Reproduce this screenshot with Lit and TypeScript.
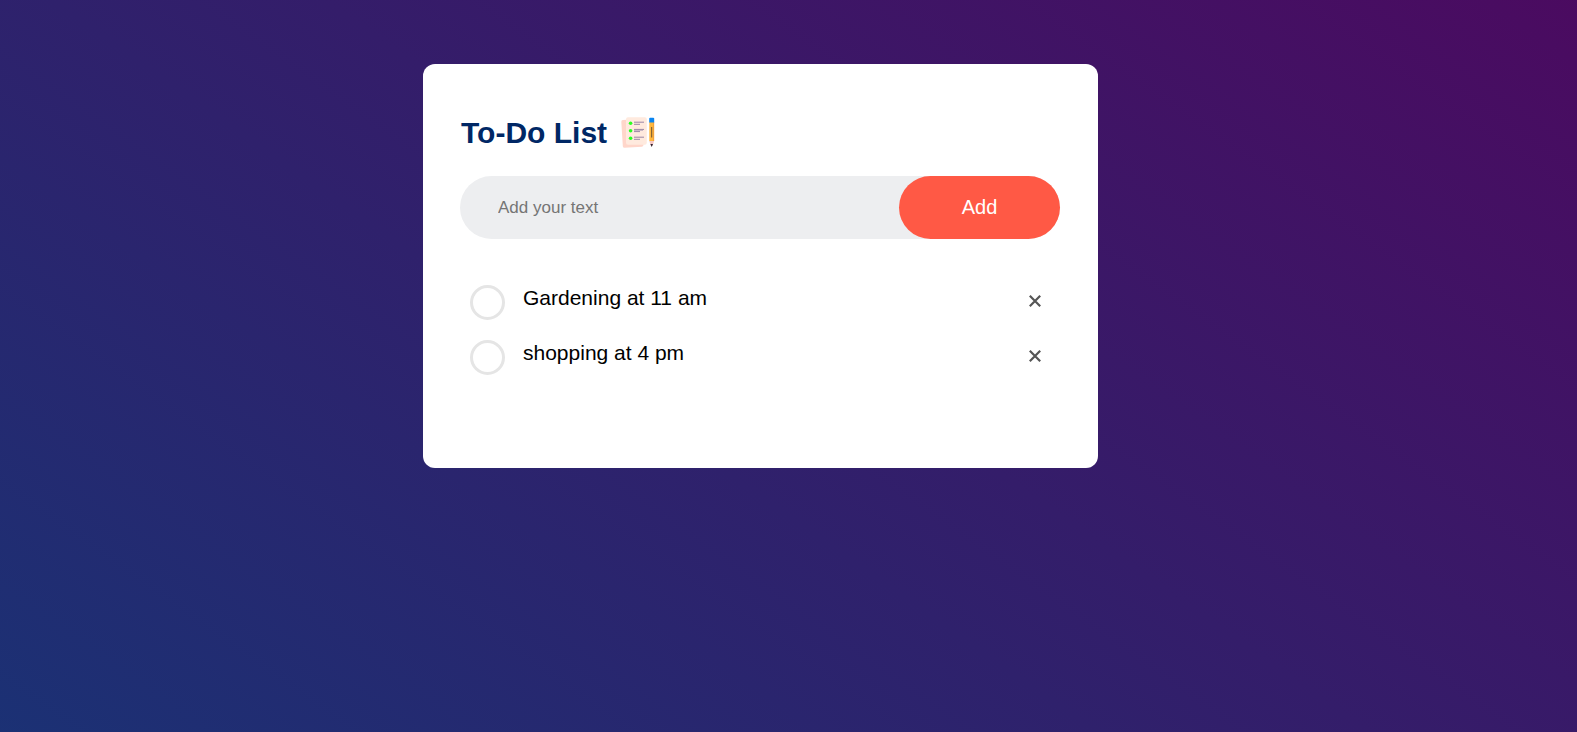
import { LitElement, html, css } from "lit";
import { customElement, state } from "lit/decorators.js";

interface Task {
  id: number;
  text: string;
  done: boolean;
}

@customElement("app-root")
export class AppRoot extends LitElement {
  static styles = css`
    :host {
      display: block;
      box-sizing: border-box;
      min-height: 100vh;
      padding: 64px 68px 24px 12px;
      background: linear-gradient(35deg, #153677 -13%, #4e085f 107%);
      font-family: Arial, "Liberation Sans", sans-serif;
    }
    * {
      box-sizing: border-box;
    }
    .card {
      max-width: 675px;
      margin: 0 auto;
      padding: 51px 38px 83px 37px;
      border-radius: 12px;
      background: #fff;
    }
    .title {
      display: flex;
      align-items: center;
      gap: 13px;
      margin: 0 0 25px;
      padding-left: 1px;
      color: #002765;
      font-size: 30px;
      line-height: 36px;
    }
    .icon {
      width: 36px;
      height: 36px;
    }
    .entry {
      display: flex;
      margin-bottom: 36px;
      border-radius: 32px;
      background: #edeef0;
    }
    .field {
      flex: 1;
      min-width: 0;
      padding: 0 0 0 38px;
      border: 0;
      outline: 0;
      background: transparent;
      font: 17px Arial, "Liberation Sans", sans-serif;
    }
    .field::placeholder {
      color: #757575;
    }
    .add {
      width: 161px;
      height: 63px;
      padding: 0;
      border: 0;
      border-radius: 32px;
      background: #ff5945;
      color: #fff;
      font: 20px Arial, "Liberation Sans", sans-serif;
      cursor: pointer;
    }
    .tasks {
      margin: 0;
      padding: 0;
      list-style: none;
    }
    .task {
      display: flex;
      align-items: flex-start;
      height: 55px;
      padding: 10px;
    }
    .check {
      flex: none;
      width: 35px;
      height: 35px;
      margin: 0 18px 0 0;
      border: 3px solid #e5e5e5;
      border-radius: 50%;
      appearance: none;
      cursor: pointer;
    }
    .check:checked {
      background: #ff5945;
    }
    .label {
      flex: 1;
      color: #000;
      font-size: 21px;
      line-height: 26px;
      cursor: pointer;
    }
    .check:checked + .label {
      color: #555;
      text-decoration: line-through;
    }
    .remove {
      width: 30px;
      height: 32px;
      padding: 0;
      border: 0;
      background: transparent;
      cursor: pointer;
    }
    .cross {
      display: block;
      width: 14px;
      height: 14px;
      margin: 0 auto;
    }
  `;

  @state() private tasks: Task[] = [
    { id: 1, text: "Gardening at 11 am", done: false },
    { id: 2, text: "shopping at 4 pm", done: false },
  ];

  private nextId = 3;

  private add(e: Event) {
    e.preventDefault();
    const field = this.renderRoot.querySelector<HTMLInputElement>(".field")!;
    const text = field.value.trim();
    if (!text) return;
    this.tasks = [...this.tasks, { id: this.nextId++, text, done: false }];
    field.value = "";
  }

  private toggle(id: number) {
    this.tasks = this.tasks.map((t) => (t.id === id ? { ...t, done: !t.done } : t));
  }

  private remove(id: number) {
    this.tasks = this.tasks.filter((t) => t.id !== id);
  }

  private renderIcon() {
    return html`<svg class="icon" viewBox="0 0 36 36" aria-hidden="true">
      <path d="M2.8 5 L20 4 Q22 4 22.2 5.5 L23.5 29.5 Q23.6 31.5 22 31.7 L4.5 32.7 Q3 32.7 2.8 31.2 L1.3 7 Q1.2 5.2 2.8 5Z" fill="#ffd6ca" />
      <rect x="6" y="2.2" width="20.8" height="27.6" rx="2" fill="#ffeade" />
      <g fill="#2bff22">
        <circle cx="10.6" cy="8.2" r="1.8" />
        <circle cx="10.6" cy="15.8" r="1.8" />
        <circle cx="10.6" cy="23.3" r="1.8" />
      </g>
      <path d="M14 7.2h10M14 9.3h6M14 14.4h10M14 16.6h6M14 22.2h10M14 24.3h6" stroke="#9a86a4" stroke-width="1" />
      <path d="M14 15.5h9" stroke="#cbb8c4" stroke-width="1" />
      <path d="M29.3 7h4.8v19h-4.8z" fill="#ffb83d" />
      <path d="M33 7h1.1v19H33z" fill="#f2a13c" />
      <path d="M29.2 3.8q0-1 1-1h3q1 0 1 1V7.5h-5z" fill="#0a84f0" />
      <path d="M31.7 12v10.5" stroke="#6b5038" stroke-width="1" />
      <path d="M29.3 26h4.8l-1.4 4.5h-2z" fill="#f4c6c4" />
      <path d="M30.4 29h2.6l-1.3 2.9z" fill="#33222c" />
    </svg>`;
  }

  render() {
    return html`
      <main class="card">
        <h1 class="title">To-Do List ${this.renderIcon()}</h1>
        <form class="entry" @submit=${this.add}>
          <input class="field" type="text" placeholder="Add your text" aria-label="Add your text" />
          <button class="add" type="submit">Add</button>
        </form>
        <ul class="tasks">
          ${this.tasks.map(
            (t) => html`<li class="task">
              <input
                class="check"
                type="checkbox"
                id="task-${t.id}"
                .checked=${t.done}
                @change=${() => this.toggle(t.id)}
              />
              <label class="label" for="task-${t.id}">${t.text}</label>
              <button class="remove" type="button" aria-label="Remove ${t.text}" @click=${() => this.remove(t.id)}>
                <svg class="cross" viewBox="0 0 14 14" aria-hidden="true">
                  <path d="M1.8 1.8l10.4 10.4M12.2 1.8L1.8 12.2" stroke="#555" stroke-width="2.2" />
                </svg>
              </button>
            </li>`
          )}
        </ul>
      </main>
    `;
  }
}
